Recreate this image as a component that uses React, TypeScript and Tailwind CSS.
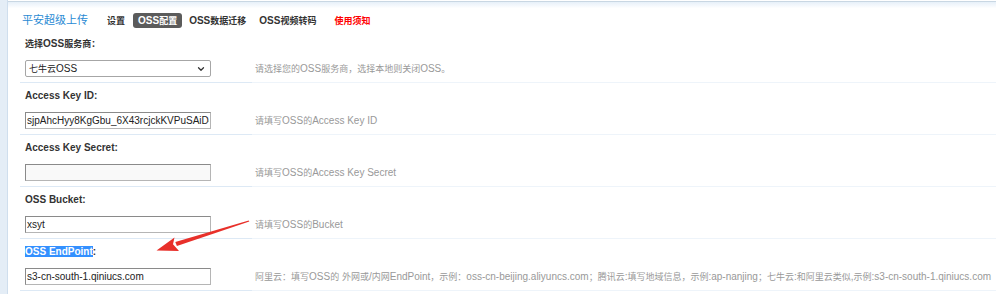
import { ChevronDown } from 'lucide-react';

// CJK glyphs in the shot are narrower than the latin text around them
const Mixed = ({ text }: { text: string }) => {
  const parts = text.split(/([\u3000-\u303f\u4e00-\u9fff\uff00-\uffef]+)/);
  return (
    <span>
      {parts.map((p, i) =>
        i % 2 === 1 ? (
          <span key={i} className="text-[0.9em]">
            {p}
          </span>
        ) : (
          <span key={i}>{p}</span>
        )
      )}
    </span>
  );
};

const Row = ({
  label,
  hint,
  children,
}: {
  label: React.ReactNode;
  hint: string;
  children: React.ReactNode;
}) => (
  <div className="flex">
    <div className="w-[232px] shrink-0 border-b border-[#dde9f5] pl-[5px] pt-[5px] pb-[5px]">
      <div className="h-[16px] leading-[16px] text-[10px] font-bold text-[#333]">
        {label}
      </div>
      <div className="mt-[8px] h-[17px] leading-none">{children}</div>
    </div>
    <div className="flex-1 border-b border-[#eef4fa] pl-[3px] pt-[29px]">
      <div className="h-[17px] leading-[17px] text-[10px] text-[#999] whitespace-nowrap">
        <Mixed text={hint} />
      </div>
    </div>
  </div>
);

const TextBox = ({ value, bg = 'bg-white' }: { value: string; bg?: string }) => (
  <input
    readOnly
    value={value}
    className={`block w-[186px] h-[17px] ${bg} border border-[#b5b5b5] border-t-[#8a8a8a] border-l-[#8a8a8a] px-[1px] text-[10px] leading-[15px] text-[#222] outline-none`}
    style={{ fontFamily: '"Liberation Sans", Arial, sans-serif' }}
  />
);

export default function App() {
  return (
    <div
      className="relative w-[996px] h-[294px] overflow-hidden bg-white flex"
      style={{ fontFamily: '"Liberation Sans", "Noto Sans CJK SC", sans-serif' }}
    >
      <div className="w-[8px] shrink-0 bg-[#e4edf6] border-r border-[#cfdeed]" />

      <div className="flex-1 flex flex-col">
        <div className="mt-[1px] border-t border-[#c9d7e3] bg-gradient-to-b from-[#e7f0f9] to-white to-[22%] pl-[14px] pt-[11px] pb-[3px]">
          <div className="flex items-center h-[15px] text-[10px] font-bold text-[#333]">
            <span className="text-[11px] font-normal text-[#2a8ad4] w-[66px]">
              平安超级上传
            </span>
            <span className="ml-[19px]">
              <Mixed text="设置" />
            </span>
            <span className="ml-[8px] h-[15px] leading-[15px] px-[5px] rounded-[3px] bg-[#5b5b5b] text-white">
              <Mixed text="OSS配置" />
            </span>
            <span className="ml-[7px]">
              <Mixed text="OSS数据迁移" />
            </span>
            <span className="ml-[13px]">
              <Mixed text="OSS视频转码" />
            </span>
            <span className="ml-[18px] text-[#f00]">
              <Mixed text="使用须知" />
            </span>
          </div>
        </div>

        <div className="pl-[12px]">
          <Row
            label={<Mixed text="选择OSS服务商：" />}
            hint="请选择您的OSS服务商，选择本地则关闭OSS。"
          >
            <div className="w-[186px] h-[17px] flex items-center justify-between border border-[#a6a6a6] rounded-[2px] bg-white pl-[3px] pr-[4px] text-[10px] text-[#222]">
              <Mixed text="七牛云OSS" />
              <ChevronDown size={10} strokeWidth={3} className="text-[#333]" />
            </div>
          </Row>
          <Row label="Access Key ID:" hint="请填写OSS的Access Key ID">
            <TextBox value="sjpAhcHyy8KgGbu_6X43rcjckKVPuSAiD48xkT" />
          </Row>
          <Row label="Access Key Secret:" hint="请填写OSS的Access Key Secret">
            <TextBox value="" bg="bg-[#f9f9f9]" />
          </Row>
          <Row label="OSS Bucket:" hint="请填写OSS的Bucket">
            <TextBox value="xsyt" />
          </Row>
          <Row
            label={
              <>
                <span className="bg-[#3390ff] text-white">OSS EndPoint</span>:
              </>
            }
            hint="阿里云：填写OSS的 外网或/内网EndPoint，示例：oss-cn-beijing.aliyuncs.com；腾讯云:填写地域信息，示例:ap-nanjing；七牛云:和阿里云类似,示例:s3-cn-south-1.qiniucs.com"
          >
            <TextBox value="s3-cn-south-1.qiniucs.com" />
          </Row>
        </div>
      </div>

      <svg
        className="absolute left-0 top-0 pointer-events-none"
        width="996"
        height="294"
        viewBox="0 0 996 294"
      >
        <polygon
          points="249.3,221.6 248.7,220.4 175.3,242 176.9,246"
          fill="#e8302a"
        />
        <polygon points="156.5,250.5 174.5,237.5 173,244.3 179,251" fill="#e8302a" />
      </svg>
    </div>
  );
}
